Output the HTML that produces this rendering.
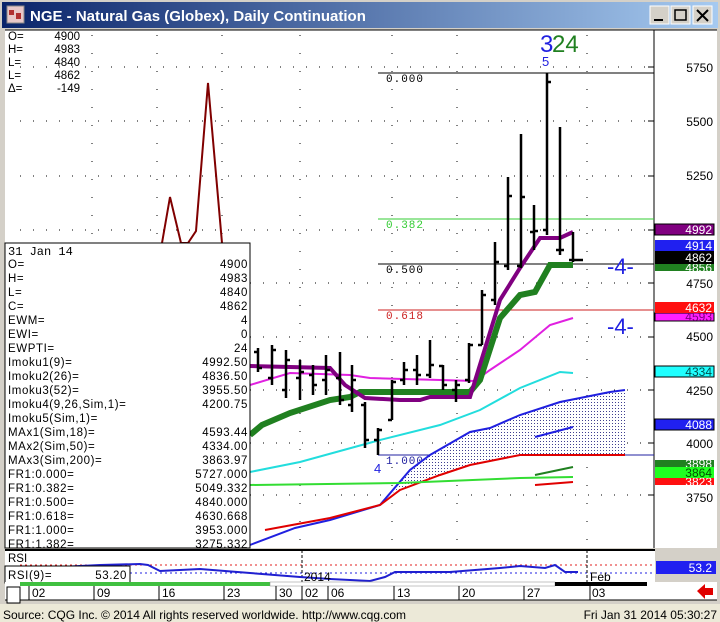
<!DOCTYPE html>
<html><head><meta charset="utf-8"><style>
body{margin:0;width:720px;height:622px;overflow:hidden;background:#d4d0c8;font-family:"Liberation Sans",sans-serif}
</style></head><body>
<svg width="720" height="622" xmlns="http://www.w3.org/2000/svg" style="position:absolute;left:0;top:0">
<defs>
<linearGradient id="tb" x1="0" x2="1"><stop offset="0" stop-color="#0a246a"/><stop offset="1" stop-color="#a6caf0"/></linearGradient>
<pattern id="hat" width="3" height="3" patternUnits="userSpaceOnUse"><rect width="3" height="3" fill="#fff"/><rect width="1" height="1" fill="#404090"/></pattern>
</defs>
<rect x="0" y="0" width="720" height="604" fill="#d4d0c8"/>
<rect x="2" y="2" width="716" height="26" fill="url(#tb)"/>
<rect x="7" y="6" width="17" height="17" fill="#e8c8c8" stroke="#888"/>
<rect x="9" y="10" width="5" height="5" fill="#b03030"/><rect x="16" y="13" width="5" height="6" fill="#b03030"/>
<text x="30" y="21" font-size="15" font-weight="bold" fill="#fff" font-family="Liberation Sans">NGE - Natural Gas (Globex), Daily Continuation</text>
<g fill="#d4d0c8" stroke="#fff"><rect x="650" y="6" width="19" height="18"/><rect x="671" y="6" width="19" height="18"/><rect x="693" y="6" width="19" height="18"/></g>
<path d="M654 20h9" stroke="#000" stroke-width="2"/><rect x="675" y="10" width="11" height="10" fill="none" stroke="#000" stroke-width="1.5"/>
<path d="M697 10l11 11M708 10l-11 11" stroke="#000" stroke-width="2"/>
<rect x="5" y="30" width="712" height="518" fill="#fff"/>
<line x1="5" y1="30" x2="717" y2="30" stroke="#000"/>
<line x1="654" y1="30" x2="654" y2="548" stroke="#000"/>
<g stroke="#000" stroke-width="1" stroke-dasharray="1 12">
<line x1="20" y1="67" x2="654" y2="67"/><line x1="20" y1="121" x2="654" y2="121"/><line x1="20" y1="176" x2="654" y2="176"/><line x1="20" y1="230" x2="654" y2="230"/><line x1="250" y1="283" x2="654" y2="283"/><line x1="250" y1="337" x2="654" y2="337"/><line x1="250" y1="390" x2="654" y2="390"/><line x1="250" y1="443" x2="654" y2="443"/><line x1="250" y1="495" x2="654" y2="495"/>
</g>
<g stroke="#000" stroke-dasharray="1 17"><line x1="92" y1="35" x2="92" y2="548"/><line x1="157" y1="35" x2="157" y2="548"/><line x1="222" y1="35" x2="222" y2="548"/><line x1="300" y1="35" x2="300" y2="548"/><line x1="392" y1="35" x2="392" y2="548"/><line x1="457" y1="35" x2="457" y2="548"/><line x1="587" y1="35" x2="587" y2="548"/></g>
<g stroke="#000"><line x1="648" y1="67" x2="654" y2="67"/><line x1="648" y1="121" x2="654" y2="121"/><line x1="648" y1="176" x2="654" y2="176"/><line x1="648" y1="230" x2="654" y2="230"/><line x1="648" y1="283" x2="654" y2="283"/><line x1="648" y1="337" x2="654" y2="337"/><line x1="648" y1="390" x2="654" y2="390"/><line x1="648" y1="443" x2="654" y2="443"/><line x1="648" y1="495" x2="654" y2="495"/></g>
<polyline points="150,260 162,243 170,197 181,243 188,243 196,231 208,83 222,243 228,260" fill="none" stroke="#800000" stroke-width="2"/>
<line x1="378" y1="73" x2="654" y2="73" stroke="#000"/>
<line x1="378" y1="219" x2="654" y2="219" stroke="#33cc33"/>
<line x1="378" y1="264" x2="654" y2="264" stroke="#000"/>
<line x1="378" y1="310" x2="654" y2="310" stroke="#cc2222"/>
<line x1="378" y1="455" x2="654" y2="455" stroke="#2020a0"/>
<g font-family="Liberation Mono" font-size="11" letter-spacing="1"><text x="386" y="82" fill="#000">0.000</text><text x="386" y="228" fill="#33cc33">0.382</text><text x="386" y="273" fill="#000">0.500</text><text x="386" y="319" fill="#cc2222">0.618</text><text x="386" y="464" fill="#2020a0">1.000</text></g>
<polygon points="392,495 410,470 430,455 470,432 490,428 520,415 560,402 580,398 610,392 625,390 625,455 540,455 520,455 470,465 440,475 400,490" fill="url(#hat)"/>
<polyline points="250,545 295,528 330,520 380,505 410,470 430,455 470,432 490,428 520,415 560,402 580,398 610,392 625,390" fill="none" stroke="#2020e0" stroke-width="2"/>
<polyline points="265,530 330,518 380,505 400,490 440,475 470,465 520,455 625,455" fill="none" stroke="#e00000" stroke-width="2"/>
<line x1="535" y1="437" x2="573" y2="427" stroke="#2020e0" stroke-width="2"/>
<line x1="535" y1="485" x2="573" y2="482" stroke="#e00000" stroke-width="2"/>
<line x1="535" y1="475" x2="573" y2="467" stroke="#208020" stroke-width="2"/>
<polyline points="250,485 400,483 520,478 573,477" fill="none" stroke="#33dd33" stroke-width="2"/>
<polyline points="250,472 300,462 380,440 440,425 480,410 520,388 560,372 573,373" fill="none" stroke="#22dddd" stroke-width="2"/>
<polyline points="250,385 290,373 350,375 370,378 440,380 475,381 490,370 520,350 550,325 573,318" fill="none" stroke="#e020e0" stroke-width="2"/>
<polyline points="250,435 262,425 290,413 330,400 350,397 360,392 470,392 480,380 500,318 520,295 535,292 550,265 573,265" fill="none" stroke="#208020" stroke-width="6"/>
<polyline points="250,366 330,368 345,385 365,398 400,400 420,400 430,397 470,397 500,300 520,268 540,238 560,238 573,232" fill="none" stroke="#800080" stroke-width="4"/>
<g stroke="#000" stroke-width="2.5" fill="none">
<path d="M258 348v24M254 352h4M258 368h4"/><path d="M272 345v40M268 378h4M272 350h4"/><path d="M286 350v48M282 390h4M286 360h4"/><path d="M300 360v40M296 378h4M300 372h4"/><path d="M313 365v30M309 375h4M313 385h4"/><path d="M326 355v40M322 380h4M326 370h4"/><path d="M340 352v53M336 378h4M340 400h4"/><path d="M352 365v47M348 405h4M352 380h4"/><path d="M365 402v46M361 405h4M365 440h4"/><path d="M378 428v27M374 440h4M378 430h4"/><path d="M392 380v40M388 420h4M392 382h4"/><path d="M404 362v23M400 380h4M404 370h4"/><path d="M417 355v30M413 370h4M417 375h4"/><path d="M430 340v38M426 375h4M430 365h4"/><path d="M443 365v25M439 366h4M443 385h4"/><path d="M456 380v22M452 390h4M456 385h4"/><path d="M469 343v40M465 380h4M469 345h4"/><path d="M482 290v55M478 345h4M482 295h4"/><path d="M495 242v63M491 300h4M495 262h4"/><path d="M508 177v93M504 266h4M508 196h4"/><path d="M521 134v134M517 266h4M521 197h4"/><path d="M534 205v45M530 232h4M534 231h4"/><path d="M547 73v162M543 230h4M547 82h4"/><path d="M560 127v128M556 250h4M560 250h4"/><path d="M573 232v30M569 260h4M573 260h10"/>
</g>
<text x="540" y="52" font-size="24" fill="#2020e0">3</text><text x="552" y="52" font-size="24" fill="#208020">24</text>
<text x="542" y="66" font-size="13" fill="#2020e0">5</text><text x="374" y="473" font-size="13" fill="#2020e0">4</text>
<text x="607" y="274" font-size="22" fill="#2020e0">-4-</text><text x="607" y="334" font-size="22" fill="#2020e0">-4-</text>
<g font-size="12" text-anchor="end">
<text x="713" y="72" fill="#000">5750</text><text x="713" y="126" fill="#000">5500</text><text x="713" y="180" fill="#000">5250</text>
<rect x="655" y="224" width="59" height="11" fill="#800080" stroke="#000"/><text x="712" y="234" fill="#fff">4992</text>
<rect x="655" y="240" width="59" height="11" fill="#2020f0"/><text x="712" y="250" fill="#fff">4914</text>
<rect x="655" y="264" width="59" height="7" fill="#208020"/><text x="712" y="272" fill="#fff">4856</text>
<rect x="655" y="251" width="59" height="13" fill="#000"/><text x="712" y="262" fill="#fff">4862</text>
<text x="713" y="288" fill="#000">4750</text>
<rect x="655" y="313" width="59" height="8" fill="#ff20ff" stroke="#000"/><text x="712" y="321" fill="#800080">4593</text>
<rect x="655" y="302" width="59" height="11" fill="#ff1010"/><text x="712" y="312" fill="#fff">4632</text>
<text x="713" y="341" fill="#000">4500</text>
<rect x="655" y="366" width="59" height="11" fill="#20ffff" stroke="#000"/><text x="712" y="376" fill="#005050">4334</text>
<text x="713" y="395" fill="#000">4250</text>
<rect x="655" y="419" width="59" height="11" fill="#2020f0" stroke="#000"/><text x="712" y="429" fill="#fff">4088</text>
<text x="713" y="448" fill="#000">4000</text>
<rect x="655" y="460" width="59" height="7" fill="#208020"/><text x="712" y="468" fill="#fff">3898</text>
<rect x="655" y="478" width="59" height="7" fill="#ff1010"/><text x="712" y="486" fill="#fff">3823</text>
<rect x="655" y="467" width="59" height="11" fill="#20ff20"/><text x="712" y="477" fill="#005000">3864</text>
<text x="713" y="502" fill="#000">3750</text>
</g>
<g font-family="Liberation Sans" font-size="11.5" fill="#000">
<text x="8" y="40">O=</text><text x="80" y="40" text-anchor="end">4900</text>
<text x="8" y="53">H=</text><text x="80" y="53" text-anchor="end">4983</text>
<text x="8" y="66">L=</text><text x="80" y="66" text-anchor="end">4840</text>
<text x="8" y="79">L=</text><text x="80" y="79" text-anchor="end">4862</text>
<text x="8" y="92">Δ=</text><text x="80" y="92" text-anchor="end">-149</text>
</g>
<rect x="5" y="243" width="245" height="305" fill="#fff" stroke="#000"/>
<g font-family="Liberation Mono" font-size="12" fill="#000">
<text x="8" y="255">31 Jan 14</text>
<g font-family="Liberation Sans" font-size="11.5" letter-spacing="0.6">
<text x="8" y="268">O=</text><text x="8" y="282">H=</text><text x="8" y="296">L=</text><text x="8" y="310">C=</text><text x="8" y="324">EWM=</text><text x="8" y="338">EWI=</text><text x="8" y="352">EWPTI=</text><text x="8" y="366">Imoku1(9)=</text><text x="8" y="380">Imoku2(26)=</text><text x="8" y="394">Imoku3(52)=</text><text x="8" y="408">Imoku4(9,26,Sim,1)=</text><text x="8" y="422">Imoku5(Sim,1)=</text><text x="8" y="436">MAx1(Sim,18)=</text><text x="8" y="450">MAx2(Sim,50)=</text><text x="8" y="464">MAx3(Sim,200)=</text><text x="8" y="478">FR1:0.000=</text><text x="8" y="492">FR1:0.382=</text><text x="8" y="506">FR1:0.500=</text><text x="8" y="520">FR1:0.618=</text><text x="8" y="534">FR1:1.000=</text><text x="8" y="548">FR1:1.382=</text>
<g text-anchor="end"><text x="248" y="268">4900</text><text x="248" y="282">4983</text><text x="248" y="296">4840</text><text x="248" y="310">4862</text><text x="248" y="324">4</text><text x="248" y="338">0</text><text x="248" y="352">24</text><text x="248" y="366">4992.50</text><text x="248" y="380">4836.50</text><text x="248" y="394">3955.50</text><text x="248" y="408">4200.75</text><text x="248" y="436">4593.44</text><text x="248" y="450">4334.00</text><text x="248" y="464">3863.97</text><text x="248" y="478">5727.000</text><text x="248" y="492">5049.332</text><text x="248" y="506">4840.000</text><text x="248" y="520">4630.668</text><text x="248" y="534">3953.000</text><text x="248" y="548">3275.332</text></g>
</g></g>
<rect x="5" y="549" width="650" height="33" fill="#fff"/>
<line x1="5" y1="550" x2="655" y2="550" stroke="#000" stroke-width="2"/>
<line x1="20" y1="565" x2="654" y2="565" stroke="#e02020" stroke-dasharray="2 3"/>
<line x1="20" y1="573" x2="654" y2="573" stroke="#2020e0" stroke-dasharray="2 3"/>
<line x1="302" y1="550" x2="302" y2="582" stroke="#000" stroke-dasharray="3 2"/>
<line x1="587" y1="550" x2="587" y2="582" stroke="#000" stroke-dasharray="3 2"/>
<polyline points="33,569 60,567 100,565 140,564 148,565 160,571 200,569 250,573 300,577 330,579 370,581 385,577 395,572 450,572 500,568 520,566 545,568 555,565 565,572 578,572" fill="none" stroke="#2020d0" stroke-width="2"/>
<text x="8" y="562" font-size="11.5" fill="#000">RSI</text>
<rect x="5" y="566" width="125" height="17" fill="#fff" stroke="#000"/>
<text x="8" y="579" font-size="11.5" letter-spacing="0.6">RSI(9)=</text><text x="127" y="579" font-size="11.5" text-anchor="end" letter-spacing="0.6">53.20</text>
<text x="304" y="581" font-size="12">2014</text><text x="590" y="581" font-size="12">Feb</text>
<rect x="656" y="561" width="60" height="13" fill="#2020f0"/><text x="712" y="572" font-size="12" fill="#fff" text-anchor="end">53.2</text>
<rect x="5" y="582" width="712" height="18" fill="#fff"/>
<rect x="20" y="582" width="250" height="4" fill="#40c040"/><rect x="270" y="582" width="285" height="4" fill="#fff" stroke="#888" stroke-width="0.5"/><rect x="555" y="582" width="92" height="4" fill="#000"/>
<line x1="5" y1="600" x2="717" y2="600" stroke="#000"/>
<rect x="7" y="587" width="13" height="16" fill="#fff" stroke="#000"/>
<g font-size="12" fill="#000"><text x="32" y="597">02</text><text x="97" y="597">09</text><text x="162" y="597">16</text><text x="227" y="597">23</text><text x="279" y="597">30</text><text x="305" y="597">02</text><text x="331" y="597">06</text><text x="397" y="597">13</text><text x="462" y="597">20</text><text x="527" y="597">27</text><text x="592" y="597">03</text></g>
<g stroke="#000"><line x1="29" y1="586" x2="29" y2="600"/><line x1="94" y1="586" x2="94" y2="600"/><line x1="159" y1="586" x2="159" y2="600"/><line x1="224" y1="586" x2="224" y2="600"/><line x1="276" y1="586" x2="276" y2="600"/><line x1="302" y1="586" x2="302" y2="600"/><line x1="328" y1="586" x2="328" y2="600"/><line x1="394" y1="586" x2="394" y2="600"/><line x1="459" y1="586" x2="459" y2="600"/><line x1="524" y1="586" x2="524" y2="600"/><line x1="590" y1="586" x2="590" y2="600"/></g>
<path d="M697 591l8-7v4h8v7h-8v4z" fill="#e00000"/>
<rect x="0" y="604" width="720" height="18" fill="#ece9d8"/>
<text x="3" y="619" font-size="12" fill="#000">Source: CQG Inc. © 2014 All rights reserved worldwide. http://www.cqg.com</text>
<text x="717" y="619" font-size="12" fill="#000" text-anchor="end">Fri Jan 31 2014 05:30:27</text>
</svg>
</body></html>
